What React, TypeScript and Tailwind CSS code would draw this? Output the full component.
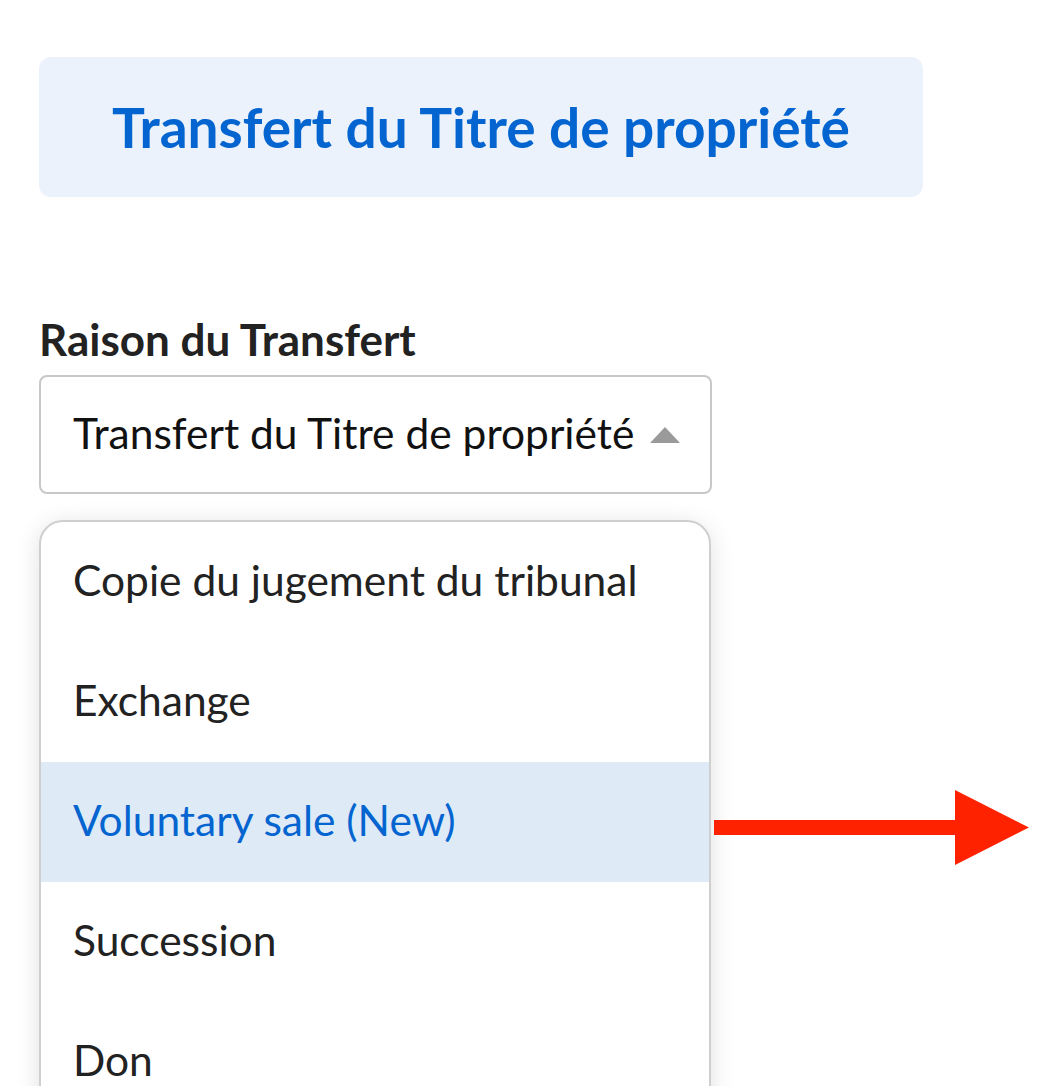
import React from "react";

const items = [
  "Copie du jugement du tribunal",
  "Exchange",
  "Voluntary sale (New)",
  "Succession",
  "Don",
];

export default function App() {
  return (
    <div
      className="relative h-[1086px] w-[1057px] overflow-hidden bg-white"
      style={{ fontFamily: "Lato, 'Open Sans', sans-serif" }}
    >
      <div className="pl-[39px] pt-[57px]">
        <div className="flex h-[140px] w-[884px] items-center justify-center rounded-[12px] bg-[#ebf2fc]">
          <h1 className="text-[55px] font-bold leading-none text-[#0565d0]">Transfert du Titre de propriété</h1>
        </div>
        <div className="mt-[117px] text-[44px] font-bold leading-[50px] text-[#222]">Raison du Transfert</div>
        <div className="mt-[11px] flex h-[119px] w-[673px] items-center justify-between rounded-[8px] border-2 border-[#c8c8c8] pl-[32px] pr-[30px]">
          <span className="pb-[2px] text-[42.5px] leading-none text-[#111]">Transfert du Titre de propriété</span>
          <svg width="30" height="16" viewBox="0 0 30 16">
            <polygon points="15,0 30,16 0,16" fill="#9a9a9a" />
          </svg>
        </div>
        <div className="mt-[26px] w-[672px] overflow-hidden rounded-[24px] border-2 border-[#cfcfcf] bg-white shadow-[0_4px_24px_rgba(0,0,0,0.12)]">
          {items.map((t, i) => (
            <div
              key={t}
              className={
                i === 2
                  ? "flex h-[120px] items-center bg-[#deebf7] pb-[4px] pl-[32px] text-[42.5px] leading-none text-[#0565d0]"
                  : "flex h-[120px] items-center pb-[4px] pl-[32px] text-[42.5px] leading-none text-[#222]"
              }
            >
              {t}
            </div>
          ))}
        </div>
      </div>
      <svg className="absolute left-[714px] top-[789px]" width="316" height="77" viewBox="0 0 316 77">
        <rect x="0" y="31" width="245" height="15" fill="#ff2200" />
        <polygon points="241,1 315,38.5 241,76" fill="#ff2200" />
      </svg>
    </div>
  );
}
